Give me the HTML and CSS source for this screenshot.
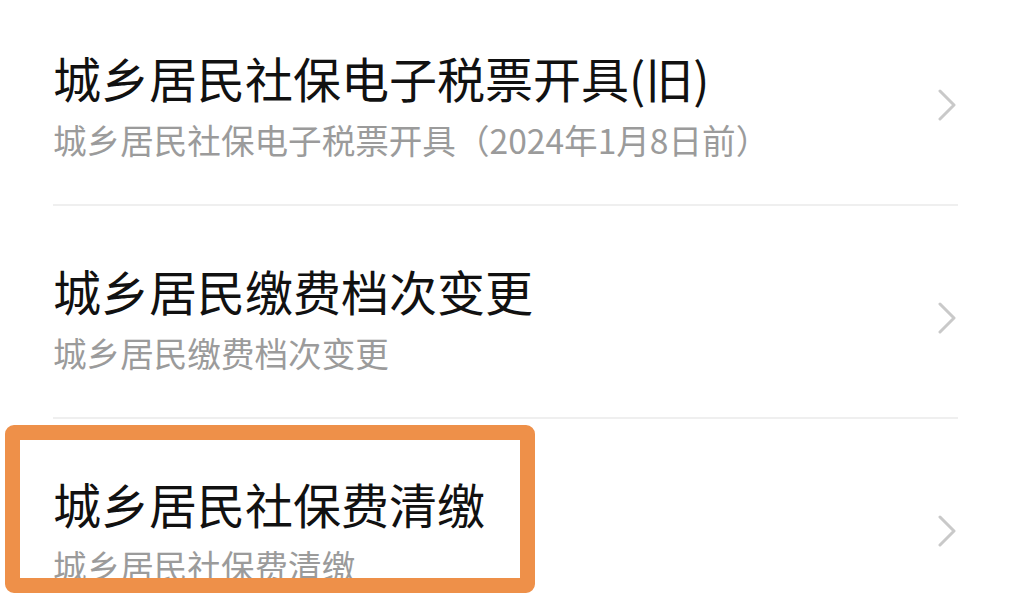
FILE: index.html
```html
<!DOCTYPE html>
<html lang="zh-CN">
<head>
  <meta charset="UTF-8" />
  <meta name="viewport" content="width=device-width, initial-scale=1.0" />
  <title>城乡居民社保</title>
  <link rel="stylesheet" href="styles.css">
</head>
<body>
  <ul class="menu-list">
    <li class="menu-item">
      <div class="menu-text">
        <div class="menu-title">城乡居民社保电子税票开具(旧)</div>
        <div class="menu-sub">城乡居民社保电子税票开具（2024年1月8日前）</div>
      </div>
      <svg class="chevron" width="20" height="32" viewBox="0 0 20 32"><path d="M3 2 L17 16 L3 30" /></svg>
    </li>
    <li class="menu-item">
      <div class="menu-text">
        <div class="menu-title">城乡居民缴费档次变更</div>
        <div class="menu-sub">城乡居民缴费档次变更</div>
      </div>
      <svg class="chevron" width="20" height="32" viewBox="0 0 20 32"><path d="M3 2 L17 16 L3 30" /></svg>
    </li>
    <li class="menu-item">
      <!-- 标注框 -->
      <div class="highlight"></div>
      <div class="menu-text">
        <div class="menu-title">城乡居民社保费清缴</div>
        <div class="menu-sub">城乡居民社保费清缴</div>
      </div>
      <svg class="chevron" width="20" height="32" viewBox="0 0 20 32"><path d="M3 2 L17 16 L3 30" /></svg>
    </li>
  </ul>
</body>
</html>
```

FILE: styles.css
```css
* {
  box-sizing: border-box;
}
html, body {
  height: 100%;
}
body {
  margin: 0;
  background: #fff;
  overflow: hidden;
  font-family: "Noto Sans CJK SC", "Noto Sans", sans-serif;
}
.menu-list {
  list-style: none;
  margin: 0 53px;
  padding: 0;
}
.menu-item {
  position: relative;
  display: flex;
  align-items: center;
  justify-content: space-between;
  padding: 60px 0 48px;
  border-bottom: 2px solid #efefef;
}
.menu-item:first-child {
  padding-top: 53px;
}
.menu-title {
  font-size: 48px;
  line-height: 48px;
  color: #111;
}
.menu-sub {
  margin-top: 22px;
  font-size: 33.6px;
  line-height: 33px;
  color: #9b9b9b;
}
.chevron {
  flex-shrink: 0;
  margin-right: 1px;
}
.chevron path {
  fill: none;
  stroke: #c9c9c9;
  stroke-width: 3;
  stroke-linecap: round;
  stroke-linejoin: round;
}
.highlight {
  position: absolute;
  left: -48px;
  top: 6px;
  width: 530px;
  height: 168px;
  border: 15px solid #ee9049;
  border-radius: 9px;
  pointer-events: none;
}
```
